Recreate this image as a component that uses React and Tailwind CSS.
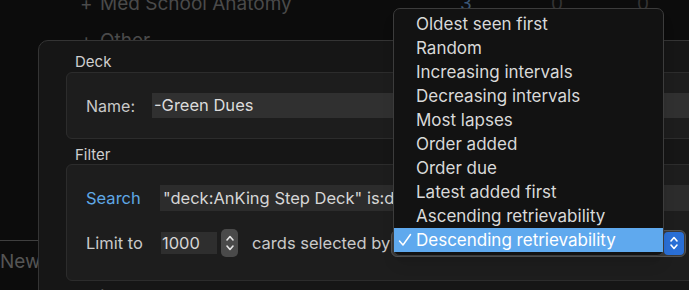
import React from "react";

const orders = [
  "Oldest seen first",
  "Random",
  "Increasing intervals",
  "Decreasing intervals",
  "Most lapses",
  "Order added",
  "Order due",
  "Latest added first",
  "Ascending retrievability",
  "Descending retrievability",
];

function Stepper() {
  return (
    <div className="flex h-[28px] w-[17px] flex-col items-center justify-center rounded-[5px] bg-[#4a4a4a]">
      <svg width="10" height="22" viewBox="0 0 10 22" fill="none" stroke="#e6e6e6" strokeWidth="1.6" strokeLinecap="round" strokeLinejoin="round">
        <path d="M2 8 L5 4.5 L8 8" />
        <path d="M2 14 L5 17.5 L8 14" />
      </svg>
    </div>
  );
}

function OrderMenu() {
  return (
    <div className="absolute left-[393px] top-[8px] z-20 w-[271px] rounded-[7px] border border-[#3c3c3c] bg-[#121212] py-[3px] shadow-lg">
      {orders.map((o, i) => {
        const selected = i === orders.length - 1;
        return (
          <div
            key={o}
            className={
              selected
                ? "flex h-[24px] items-center bg-[#5fa9ee] text-white"
                : "flex h-[24px] items-center text-[#d9d9d9]"
            }
          >
            <span className="flex w-[22px] justify-center">
              {selected && (
                <svg width="14" height="14" viewBox="0 0 14 14" fill="none" stroke="white" strokeWidth="1.5" strokeLinecap="round" strokeLinejoin="round">
                  <path d="M1.5 8 L5 12 L12.5 1.5" />
                </svg>
              )}
            </span>
            <span className="text-[17px] leading-none">{o}</span>
          </div>
        );
      })}
    </div>
  );
}

export default function App() {
  return (
    <div className="relative h-[290px] w-[689px] overflow-hidden bg-[#0c0c0c] font-['Inter','Liberation_Sans',sans-serif]">
      {/* deck list behind the dialog */}
      <div className="flex h-[40px] flex-col pl-[80px] text-[19px] text-[#4a4a4a]">
        <div className="-mt-[14px] flex h-[37px] shrink-0 items-center">
          <span className="w-[20px]">+</span>
          <span className="w-[360px]">Med School Anatomy</span>
          <span className="w-[91px] text-[#3b5877]">3</span>
          <span className="w-[86px] text-[#333]">0</span>
          <span className="text-[#333]">0</span>
        </div>
        <div className="flex h-[37px] shrink-0 items-center">
          <span className="w-[20px]">+</span>
          <span>Other</span>
        </div>
      </div>
      <div className="mt-[200px] w-[38px] border-t border-[#3f3f3f]" />
      <div className="mt-[11px] text-[19px] leading-none text-[#555]">New</div>

      {/* options dialog */}
      <div className="absolute left-[38px] top-[40px] z-10 h-[300px] w-[700px] rounded-[10px] border border-[#343434] bg-[#161616] pl-[27px] pt-[12px] text-[#cfcfcf]">
        <div className="pl-[9px] text-[15px] leading-[17px]">Deck</div>
        <div className="mt-[2px] h-[67px] rounded-[6px] border border-[#2c2c2c] bg-[#1d1d1d] pl-[19px] pt-[20px]">
          <div className="flex items-center">
            <span className="w-[66px] text-[16px] text-[#c9c9c9]">Name:</span>
            <div className="flex h-[25px] flex-1 items-center bg-[#303030] pl-[2px] text-[16.5px] text-[#dcdcdc]">
              -Green Dues
            </div>
          </div>
        </div>
        <div className="mt-[7px] pl-[9px] text-[15px] leading-[17px]">Filter</div>
        <div className="mt-[1px] h-[117px] rounded-[6px] border border-[#2c2c2c] bg-[#1d1d1d] pl-[19px] pt-[20px]">
          <div className="flex items-center">
            <span className="w-[74px] text-[16.5px] text-[#5fa8e6]">Search</span>
            <div className="flex h-[26px] flex-1 items-center bg-[#2c2c2c] pl-[3px] text-[16.5px] text-[#d6d6d6] whitespace-nowrap">
              "deck:AnKing Step Deck" is:due
            </div>
          </div>
          <div className="mt-[18px] flex items-center">
            <span className="w-[75px] text-[16.5px] text-[#c9c9c9]">Limit to</span>
            <div className="flex h-[22px] w-[56px] items-center bg-[#2e2e2e] pl-[1px] text-[16.5px] text-[#d6d6d6]">
              1000
            </div>
            <div className="ml-[4px]">
              <Stepper />
            </div>
            <span className="ml-[14px] text-[16.5px] text-[#c9c9c9]">cards selected by</span>
            <div className="ml-[1px] flex h-[27px] w-[295px] items-center justify-end rounded-[6px] border border-[#555] bg-[#3a3a3a] p-[1px]">
              <div className="flex h-full w-[20px] items-center justify-center rounded-[4px] bg-[#2a6fd6]">
                <svg width="10" height="18" viewBox="0 0 10 18" fill="none" stroke="white" strokeWidth="1.6" strokeLinecap="round" strokeLinejoin="round">
                  <path d="M2 7 L5 3.5 L8 7" />
                  <path d="M2 11 L5 14.5 L8 11" />
                </svg>
              </div>
            </div>
          </div>
        </div>
        <div className="mt-[4px] pl-[9px] text-[15px] text-[#555]">Options</div>
      </div>

      <OrderMenu />
    </div>
  );
}
